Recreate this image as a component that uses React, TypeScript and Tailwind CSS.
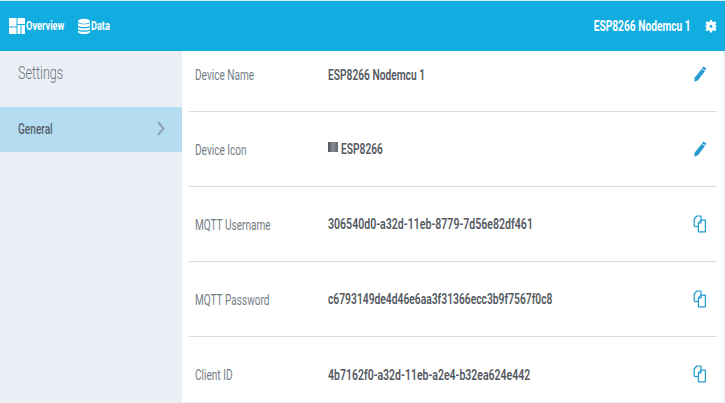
import React from "react";

function T({ children, className = "", right = false }: { children: React.ReactNode; className?: string; right?: boolean }) {
  return (
    <span className={`inline-block whitespace-nowrap font-['Roboto',sans-serif] ${right ? "origin-right" : "origin-left"} ${className}`}>
      {children}
    </span>
  );
}

function Pencil() {
  return (
    <svg width="14" height="16" viewBox="0 0 14 16" className="text-[#2a9bd0]" fill="currentColor">
      <path d="M10 0.4 L13.4 2.2 L12.4 4.2 L9 2.4 Z" />
      <path d="M8.6 3 L12 4.9 L5 14.2 L1.4 15.8 L1.6 11.8 Z" />
    </svg>
  );
}

function Copy() {
  return (
    <svg width="14" height="18" viewBox="0 0 14 18" fill="none" stroke="#1f9ccf" strokeWidth="1.2" strokeLinejoin="round">
      <path d="M1.2 11.5 V4 L3.8 1 H8 V5" />
      <path d="M1.2 11.5 H5.4" />
      <path d="M5.4 8 L8 5.2 H12.4 V16.8 H5.4 Z" />
      <path d="M8 5.2 V8 H5.4" />
    </svg>
  );
}

const rows = [
  { label: "Device Name", value: "ESP8266 Nodemcu 1", icon: "edit", scale: "scale-x-[0.73]" },
  { label: "Device Icon", value: "ESP8266", icon: "edit", chip: true, scale: "scale-x-[0.73]" },
  { label: "MQTT Username", value: "306540d0-a32d-11eb-8779-7d56e82df461", icon: "copy", scale: "scale-x-[0.755]" },
  { label: "MQTT Password", value: "c6793149de4d46e6aa3f31366ecc3b9f7567f0c8", icon: "copy", scale: "scale-x-[0.735]" },
  { label: "Client ID", value: "4b7162f0-a32d-11eb-a2e4-b32ea624e442", icon: "copy", scale: "scale-x-[0.75]" },
];

export default function App() {
  return (
    <div className="w-[725px] h-[403px] overflow-hidden bg-white flex flex-col">
      <header className="h-[51px] shrink-0 bg-[#12ade0] border-t border-[#d5eef7] flex items-center justify-between pl-[9px] pr-[8px] text-white">
        <nav className="flex items-center">
          <svg width="16" height="16" viewBox="0 0 16 16" fill="#fff">
            <path d="M0 0H7.5V8.5H0Z" />
            <path d="M0 9.5H7.5V16H0Z" />
            <path d="M8.5 0H16V6H8.5Z" />
            <path d="M8.5 7H11.5V16H8.5Z" />
            <path d="M12.5 7H16V16H12.5Z" />
          </svg>
          <T className="ml-[1px] w-[52px] text-[12.5px] font-bold scale-x-[0.74]">Overview</T>
          <svg width="12" height="17" viewBox="0 0 13 17" fill="#fff">
            <ellipse cx="6.5" cy="2.8" rx="6.5" ry="2.8" />
            <path d="M0 4.6C1.5 6.6 11.5 6.6 13 4.6V7.6C11.5 9.6 1.5 9.6 0 7.6Z" />
            <path d="M0 9C1.5 11 11.5 11 13 9V11.4C11.5 13.4 1.5 13.4 0 11.4Z" />
            <path d="M0 12.8C1.5 14.8 11.5 14.8 13 12.8V14.4C11.5 17.4 1.5 17.4 0 14.4Z" />
          </svg>
          <T className="ml-[1px] text-[12.5px] font-bold scale-x-[0.73]">Data</T>
        </nav>
        <div className="flex items-center gap-[14px]">
          <T right className="text-[15px] font-bold scale-x-[0.68]">ESP8266 Nodemcu 1</T>
          <svg width="12" height="14" viewBox="0 0 24 24" fill="#fff">
            <path fillRule="evenodd" d="M10 0h4l.7 3.4 2 .9L20 2.6 23 6l-2.2 2.6.5 2.2L24 12v1l-2.7 1.2-.5 2.2L23 19l-3 3.4-3.3-1.7-2 .9L14 25h-4l-.7-3.4-2-.9L4 22.4 1 19l2.2-2.6-.5-2.2L0 13v-1l2.7-1.2.5-2.2L1 6l3-3.4 3.3 1.7 2-.9ZM12 9.5a3 3 0 1 0 0 6 3 3 0 0 0 0-6Z" />
          </svg>
        </div>
      </header>
      <div className="flex flex-1 min-h-0">
        <aside className="w-[182px] shrink-0 bg-[#eceef5] flex flex-col">
          <div className="h-[56px] pl-[18px] pt-[10px] leading-[24px]">
            <T className="text-[#6a7580] text-[18.5px] font-light scale-x-[0.68]">Settings</T>
          </div>
          <div className="h-[45px] bg-[#b5ddf2] pl-[18px] pr-[16px] flex items-center justify-between">
            <T className="text-[#55626e] text-[14px] scale-x-[0.72] font-medium">General</T>
            <svg width="8" height="15" viewBox="0 0 8 15" fill="none" stroke="#8fa3b3" strokeWidth="2" className="-translate-x-[1px] -translate-y-[1px]">
              <path d="M1 1L6.5 7.5L1 14" />
            </svg>
          </div>
        </aside>
        <main className="flex-1 min-w-0 pl-[7px] pr-[6px] pb-[2px] border-b border-[#eceef5] border-r-2 border-r-[#f0f1f6]">
          {rows.map((r, i) => (
            <div
              key={r.label}
              className={`flex border-[#d9dcdf] items-center ${i === 0 ? "h-[61px] pb-[14px]" : "h-[75px] pb-[1px]"} ${i < 4 ? "border-b" : ""}`}
            >
              <div className="w-[139px] pl-[6px] leading-none">
                <T className="text-[#747e87] text-[14px] scale-x-[0.72]">{r.label}</T>
              </div>
              <div className="flex-1 flex items-center leading-none pt-[1px]">
                {r.chip && (
                  <span className="w-[10px] h-[10px] bg-gradient-to-r from-[#4e5459] via-[#8a9095] to-[#5f666c] mr-[3px] -mt-[4px] shrink-0" />
                )}
                <T className={`text-[#54595f] text-[14px] font-semibold ${r.scale}`}>{r.value}</T>
              </div>
              <div className="w-[30px] pr-[4px] flex justify-center">
                {r.icon === "edit" ? <Pencil /> : <Copy />}
              </div>
            </div>
          ))}
        </main>
      </div>
    </div>
  );
}
